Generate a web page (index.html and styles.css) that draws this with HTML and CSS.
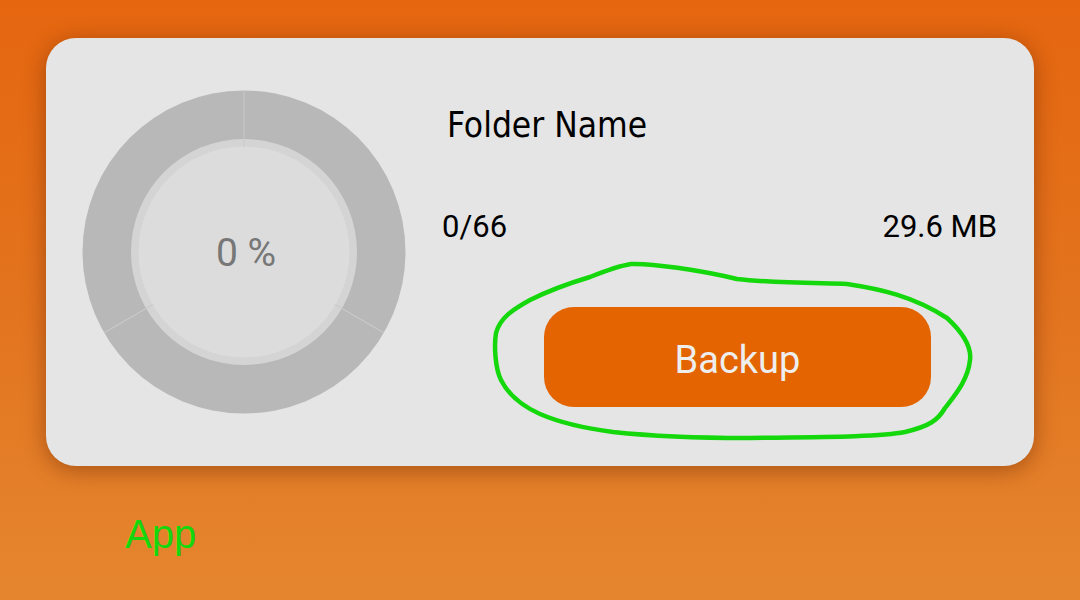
FILE: index.html
```html
<!DOCTYPE html>
<html>
<head>
<meta charset="utf-8">
<link rel="stylesheet" href="styles.css">
</head>
<body>
<div class="page">
  <div class="card">
    <div class="donut">
      <svg class="donut-svg" width="324" height="324" viewBox="0 0 324 324">
        <circle cx="162" cy="162" r="161.5" fill="#b8b8b8"/>
        <circle cx="162" cy="162" r="113" fill="#d4d4d4"/>
        <circle cx="162" cy="162" r="105.5" fill="#dcdcdc"/>
        <g stroke="#c9c9c9" stroke-width="1">
          <line x1="162" y1="0.5" x2="162" y2="57"/>
          <line x1="162" y1="0.5" x2="162" y2="57" transform="rotate(120 162 162)"/>
          <line x1="162" y1="0.5" x2="162" y2="57" transform="rotate(240 162 162)"/>
        </g>
      </svg>
      <div class="donut-label">0 %</div>
    </div>
    <div class="info">
      <div class="title">Folder Name</div>
      <div class="stats">
        <span>0/66</span>
        <span>29.6 MB</span>
      </div>
      <button class="backup">Backup</button>
    </div>
  </div>
  <div class="app">App</div>
  <svg class="scribble" width="1080" height="600" viewBox="0 0 1080 600">
    <path d="M631 264 C650 263 700 270 737 279 C770 283 820 283 847 284 C880 289 913 296 947 318 C960 330 972 345 970 360 C968 380 955 395 945 408 C938 420 930 426 905 432 C880 437 820 437 747 438 C700 438 660 437 613 432 C590 429 563 424 540 414 C520 405 508 394 501 380 C495 368 494 345 496 333 C500 318 512 310 530 300 C550 290 570 283 590 277 C605 271 618 266 631 264 Z" fill="none" stroke="#14d80c" stroke-width="4.5" stroke-linejoin="round"/>
  </svg>
</div>
</body>
</html>
```
FILE: styles.css
```css
html, body {
  margin: 0;
  padding: 0;
}
body {
  width: 1080px;
  height: 600px;
  overflow: hidden;
  background: linear-gradient(180deg, #e5660f 0%, #e37520 55%, #e5862f 100%);
  font-family: "Roboto", "Liberation Sans", sans-serif;
}
.page {
  position: relative;
  width: 1080px;
  height: 600px;
  padding-top: 38px;
  box-sizing: border-box;
}
.card {
  margin: 0 46px;
  height: 428px;
  box-sizing: border-box;
  background: #e5e5e5;
  border-radius: 30px;
  box-shadow: 0 4px 22px rgba(90, 30, 0, 0.45);
  display: flex;
  align-items: center;
  padding: 0 37px 0 36px;
}
.donut {
  display: grid;
  width: 324px;
  height: 324px;
  flex: none;
}
.donut-svg {
  grid-area: 1 / 1;
  display: block;
}
.donut-label {
  grid-area: 1 / 1;
  align-self: center;
  justify-self: center;
  margin-left: 4px;
  margin-top: 2px;
  font-family: "Roboto", sans-serif;
  font-size: 39px;
  color: #777777;
  line-height: 46px;
}
.info {
  align-self: flex-start;
  margin-top: 67px;
  margin-left: 36px;
  flex: 1;
  display: flex;
  flex-direction: column;
}
.title {
  font-family: "DejaVu Sans Condensed", "DejaVu Sans", "Noto Sans", sans-serif;
  font-size: 35px;
  line-height: 40px;
  color: #000;
  padding-left: 5px;
}
.stats {
  margin-top: 64px;
  display: flex;
  justify-content: space-between;
  font-family: "Roboto", sans-serif;
  font-size: 31px;
  line-height: 36px;
  color: #000;
}
.backup {
  margin-top: 62px;
  margin-left: 102px;
  width: 387px;
  height: 100px;
  border: none;
  border-radius: 30px;
  background: #e36400;
  color: #eeeeee;
  font-family: "Roboto", sans-serif;
  font-size: 38px;
  padding: 5px 0 0;
}
.app {
  margin-top: 45px;
  margin-left: 125px;
  font-family: "Liberation Sans", sans-serif;
  font-size: 40px;
  line-height: 46px;
  color: #14d80c;
}
.scribble {
  position: absolute;
  left: 0;
  top: 0;
  pointer-events: none;
}
```
